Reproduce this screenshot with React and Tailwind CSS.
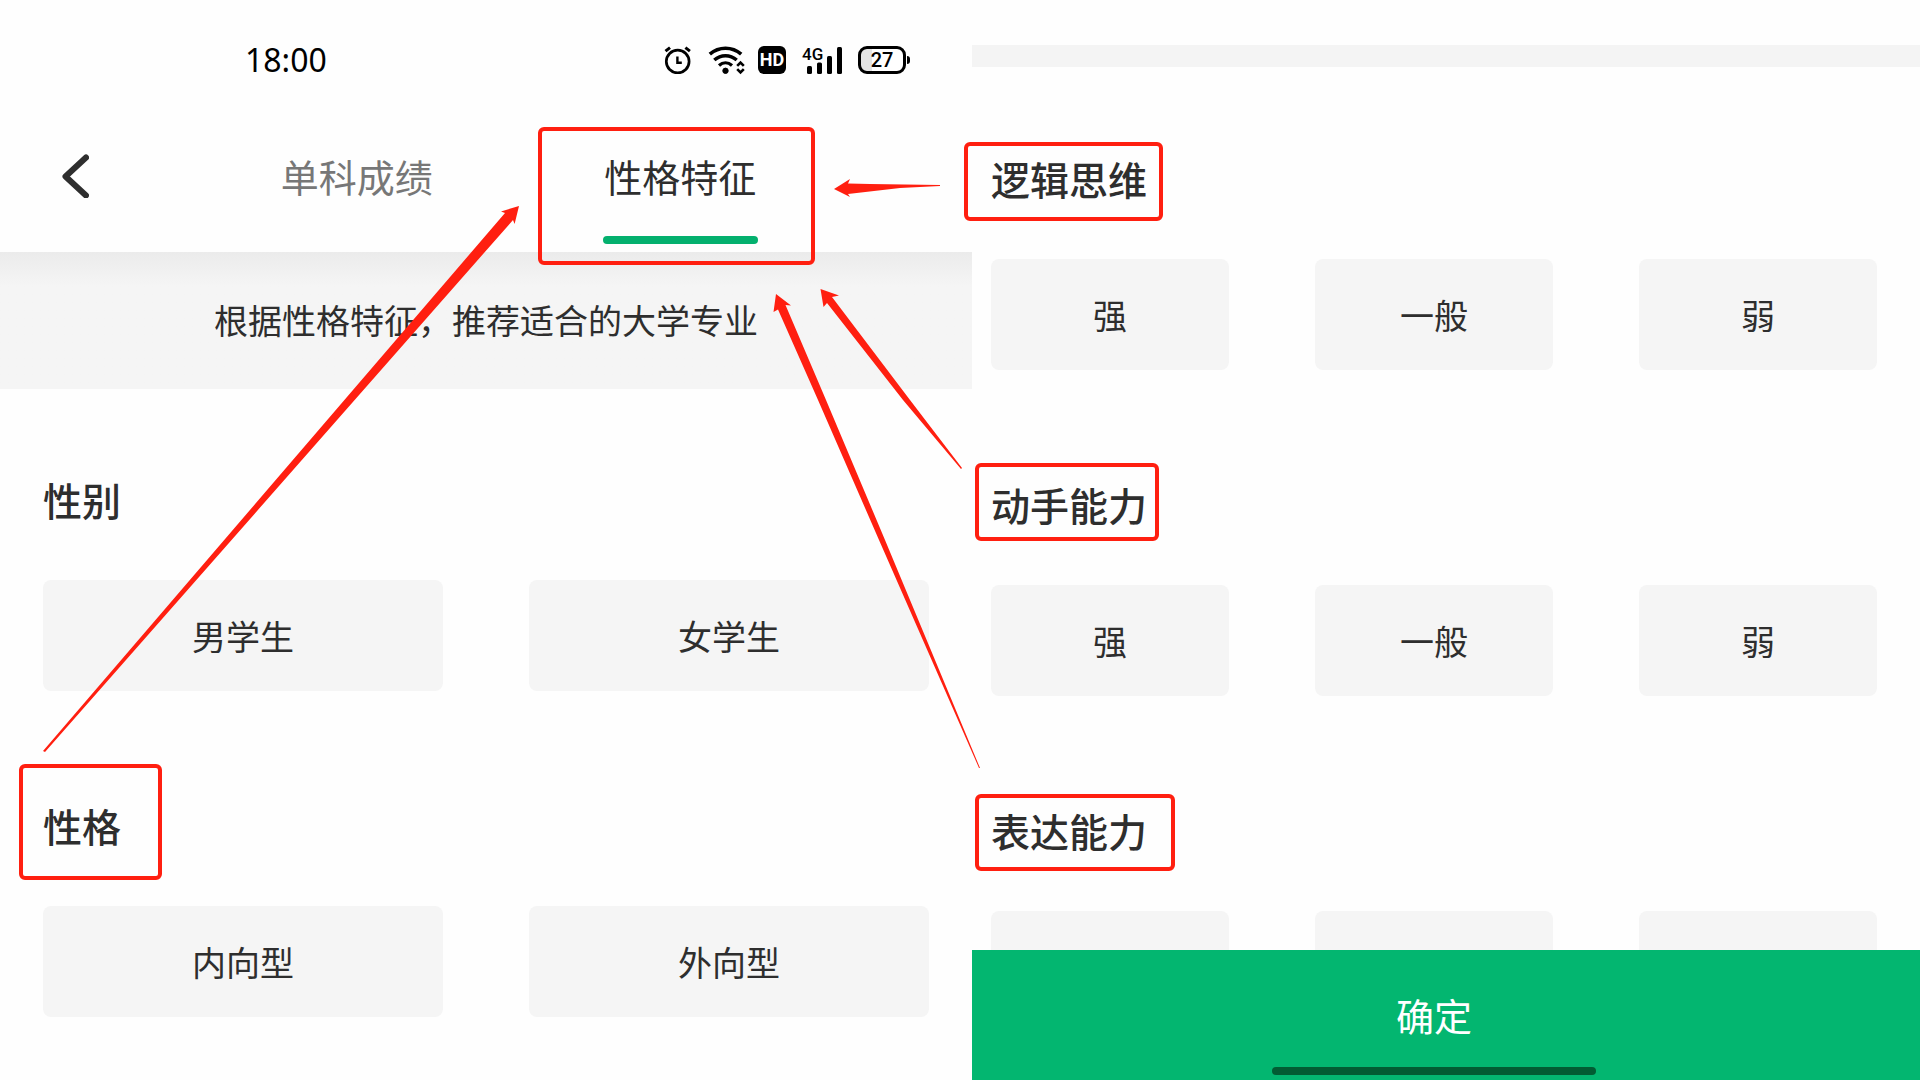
import React, { useState } from "react";

const profileGroups = [
  { title: "性别", options: ["男学生", "女学生"] },
  {
    title: "性格",
    options: ["内向型", "外向型"],
    mark: "-top-9 -bottom-[30px] -left-6 -right-[41px]",
  },
];

const abilityGroups = [
  {
    title: "逻辑思维",
    options: ["强", "一般", "弱"],
    mark: "-top-[11px] -bottom-[18px] -left-[27px] -right-4",
  },
  {
    title: "动手能力",
    options: ["强", "一般", "弱"],
    mark: "-top-4 -bottom-3 -left-4 -right-3",
  },
  {
    title: "表达能力",
    options: ["强", "一般", "弱"],
    mark: "-top-[11px] -bottom-4 -left-4 -right-7",
  },
];

// Each arrow starts at its tip and runs round the head and shaft
const arrows = [
  "519,206 514.6,224 513,220 45,752 43,751 505,213 501,211.5",
  "834,189 850,179 848,183.5 870,184 940,185 940,186 900,188 848,194 850,197",
  "820.5,289 839,295.5 832,297 910,400 962,468 961,469 903,400 827,303 823.5,307",
  "776,294 791,305.5 785.5,305 826,400 885,540 980,768 979,768 879,540 818,400 778,309.5 773.5,312",
];

const Mark = ({ className }) => (
  <span
    aria-hidden="true"
    className={`pointer-events-none absolute rounded-md border-4 border-[#ff1f10] ${className}`}
  />
);

const AlarmIcon = () => (
  <svg className="h-7 w-[30px]" viewBox="0 0 30 28" fill="none" stroke="#000">
    <circle cx="14.7" cy="15.5" r="11.4" strokeWidth="2.7" />
    <path d="M14.4 10.500v6.300h4.400" strokeWidth="2.400" />
    <path d="M2.500 5.200 7 1.600M26.900 5.200 22.400 1.600" strokeWidth="3" />
  </svg>
);

const WifiIcon = () => (
  <svg className="h-7 w-[33px] overflow-visible" viewBox="0 0 33 28" fill="none" stroke="#000">
    <path d="M.8 8.200C10 .2 23 .2 32.200 8.200" strokeWidth="3.600" />
    <path d="M5.300 14c6.600-5.700 15.800-5.700 22.400 0" strokeWidth="3.500" />
    <path d="M10 19.400c4-3.400 9-3.400 13 0" strokeWidth="3.300" />
    <circle cx="16.500" cy="24.800" r="2.700" fill="#000" />
    <path d="m28.200 19.800 3.300-3.300 3.300 3.300M28.200 23.200l3.300 3.300 3.300-3.300" strokeWidth="2.600" />
  </svg>
);

const SignalIcon = () => (
  <div className="relative h-7 w-10">
    <span className="absolute -top-1 left-0 font-['Roboto',sans-serif] text-[17px] leading-6 font-medium">
      4G
    </span>
    <svg className="h-7 w-10" viewBox="0 0 40 28" fill="#000">
      <rect x="5" y="20" width="5" height="8" rx="1.500" />
      <rect x="15" y="16.500" width="5" height="11.500" rx="1.500" />
      <rect x="25" y="10" width="5" height="18" rx="1.500" />
      <rect x="35" y="1" width="5" height="27" rx="1.500" />
    </svg>
  </div>
);

const Battery = () => (
  <div className="flex items-center gap-px">
    <div className="flex h-7 w-12 items-center justify-center rounded-[9px] border-[3px] border-black bg-linear-to-r from-[#e4e4e4] from-27% to-white to-27% font-['Roboto',sans-serif] text-xl leading-5 font-medium">
      27
    </div>
    <span className="h-2 w-[3px] rounded-r-sm bg-black" />
  </div>
);

const StatusBar = () => (
  <div className="flex h-[120px] items-center justify-between pr-[62px] pl-[245px] text-black">
    <span className="font-['Noto_Sans',sans-serif] text-[32px] leading-10">18:00</span>
    <div className="flex items-center gap-4">
      <AlarmIcon />
      <WifiIcon />
      <span className="flex h-7 w-7 items-center justify-center rounded-md bg-black font-['Roboto',sans-serif] text-lg leading-5 font-bold text-white">
        HD
      </span>
      <SignalIcon />
      <Battery />
    </div>
  </div>
);

const Tab = ({ label, active, onClick, children }) => (
  <button
    type="button"
    role="tab"
    aria-selected={active}
    onClick={onClick}
    className={`relative flex flex-1 flex-col items-center justify-end pb-2 text-[38px] leading-14 ${
      active ? "text-[#2e2e2e]" : "text-[#777777]"
    }`}
  >
    {label}
    <span className={`mt-8 h-2 w-[155px] rounded-full ${active ? "bg-[#03b06e]" : ""}`} />
    {children}
  </button>
);

const OptionGroup = ({ group, selected, onSelect, gridClass }) => (
  <section className="flex flex-col gap-14">
    <h2 className="relative self-start text-[39px] leading-[50px] font-medium">
      {group.title}
      {group.mark && <Mark className={group.mark} />}
    </h2>
    <div className={`grid ${gridClass}`}>
      {group.options.map((option) => (
        <button
          key={option}
          type="button"
          aria-pressed={selected === option}
          onClick={() => onSelect(group.title, option)}
          className="h-[111px] rounded-lg bg-[#f5f5f5] text-[34px] leading-12"
        >
          {option}
        </button>
      ))}
    </div>
  </section>
);

export default function App() {
  const [tab, setTab] = useState("traits");
  const [answers, setAnswers] = useState({});

  const handleSelect = (title, option) => {
    setAnswers((prev) => ({ ...prev, [title]: option }));
  };

  return (
    <main className="relative grid h-screen grid-cols-[81fr_79fr] overflow-hidden bg-[#fefefe] font-['Noto_Sans_CJK_SC',sans-serif] text-[#2e2e2e]">
      {/* First screen: tabs and profile */}
      <div className="flex min-w-0 flex-col">
        <StatusBar />
        <nav className="flex h-[132px]">
          <button type="button" aria-label="返回" className="w-[195px] pb-5 pl-[61px]">
            <svg className="h-11 w-7" viewBox="0 0 28 44" fill="none" stroke="#2e2e2e">
              <path d="M25 3.500 4.500 22.500 25 41.500" strokeWidth="6" strokeLinecap="round" strokeLinejoin="round" />
            </svg>
          </button>
          <div role="tablist" className="flex flex-1">
            <Tab label="单科成绩" active={tab === "scores"} onClick={() => setTab("scores")} />
            <Tab label="性格特征" active={tab === "traits"} onClick={() => setTab("traits")}>
              <Mark className="top-[7px] right-[27px] -bottom-[13px] left-[19px]" />
            </Tab>
          </div>
          <div className="w-[130px]" />
        </nav>
        <p className="flex h-[137px] items-center justify-center bg-linear-to-b from-[#ebebeb] to-[#f5f5f5] to-25% pb-0.5 text-[34px] leading-12">
          根据性格特征，推荐适合的大学专业
        </p>
        <div className="flex flex-col gap-[109px] px-[43px] pt-[85px]">
          {profileGroups.map((group) => (
            <OptionGroup
              key={group.title}
              group={group}
              selected={answers[group.title]}
              onSelect={handleSelect}
              gridClass="grid-cols-2 gap-x-[86px]"
            />
          ))}
        </div>
      </div>

      {/* Second screen: abilities and confirm */}
      <div className="flex min-h-0 min-w-0 flex-col">
        <div className="min-h-0 flex-1 pt-[45px]">
          <div className="h-[22px] bg-[#f4f4f4]" />
          <div className="flex flex-col gap-[109px] pt-[86px] pr-[43px] pl-[19px]">
            {abilityGroups.map((group) => (
              <OptionGroup
                key={group.title}
                group={group}
                selected={answers[group.title]}
                onSelect={handleSelect}
                gridClass="grid-cols-3 gap-x-[86px]"
              />
            ))}
          </div>
        </div>
        <div className="z-10 flex h-[130px] shrink-0 flex-col items-center justify-between bg-[#03b670] pt-[37px] pr-6 pb-[5px]">
          <button type="button" className="w-full text-[38px] leading-14 text-white">
            确定
          </button>
          <span className="h-2 w-[324px] rounded-full bg-[#025c33]" />
        </div>
      </div>

      {/* Arrows from the marked headings to the tab */}
      <svg
        aria-hidden="true"
        className="pointer-events-none absolute inset-0 h-full w-full"
        viewBox="0 0 1920 1080"
        preserveAspectRatio="none"
        fill="#ff1f10"
      >
        {arrows.map((points) => (
          <polygon key={points} points={points} />
        ))}
      </svg>
    </main>
  );
}
